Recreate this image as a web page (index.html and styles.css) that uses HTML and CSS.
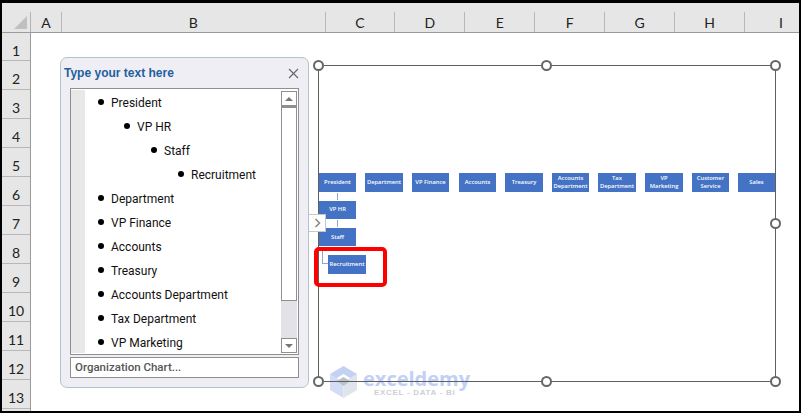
FILE: index.html
```html
<!DOCTYPE html>
<html lang="en">
<head>
  <meta charset="UTF-8" />
  <title>Type your text here</title>
  <link rel="stylesheet" href="styles.css">
</head>
<body>
  <div class="sheet">
    <div class="col-heads">
      <div class="corner"><span class="corner-mark"></span></div>
      <div class="col col-a">A</div>
      <div class="col col-b">B</div>
      <div class="col">C</div>
      <div class="col">D</div>
      <div class="col">E</div>
      <div class="col">F</div>
      <div class="col">G</div>
      <div class="col">H</div>
      <div class="col col-i">I</div>
    </div>
    <div class="row-heads">
      <div class="row row-first">1</div>
      <div class="row">2</div>
      <div class="row">3</div>
      <div class="row">4</div>
      <div class="row">5</div>
      <div class="row">6</div>
      <div class="row">7</div>
      <div class="row">8</div>
      <div class="row">9</div>
      <div class="row">10</div>
      <div class="row">11</div>
      <div class="row">12</div>
      <div class="row">13</div>
    </div>

    <!-- text pane floats over the cells -->
    <div class="pane">
      <div class="pane-head">
        <span class="pane-title">Type your text here</span>
        <svg class="pane-close" width="11" height="11" viewBox="0 0 11 11"><path d="M1 1l9 9M10 1l-9 9" stroke="#666" stroke-width="1.1" fill="none"/></svg>
      </div>
      <div class="list-box">
        <div class="gutter"></div>
        <ul class="list">
          <li>President</li>
          <li class="lvl2">VP HR</li>
          <li class="lvl3">Staff</li>
          <li class="lvl4">Recruitment</li>
          <li>Department</li>
          <li>VP Finance</li>
          <li>Accounts</li>
          <li>Treasury</li>
          <li>Accounts Department</li>
          <li>Tax Department</li>
          <li>VP Marketing</li>
        </ul>
        <div class="scroll">
          <div class="scroll-btn"><span class="arrow-up"></span></div>
          <div class="scroll-thumb"></div>
          <div class="scroll-btn scroll-btn-end"><span class="arrow-down"></span></div>
        </div>
      </div>
      <div class="pane-foot">Organization Chart...</div>
    </div>

    <!-- watermark sits under the frame lines -->
    <div class="mark">
      <svg class="mark-logo" width="29" height="32" viewBox="0 0 29 32">
        <path d="M14.5 0L28 8v8L14.5 8 1 16V8z" fill="#c3d1f3"/>
        <path d="M1 8l13.5 8v16L1 24z" fill="#d3def6"/>
        <path d="M28 8L14.5 16v16L28 24z" fill="#dfe5ea"/>
        <path d="M8 15l6.5-4 6.5 4-6.5 5z" fill="#bcc2ca"/>
      </svg>
      <div class="mark-text">
        <span class="mark-name">exceldemy</span>
        <span class="mark-sub">EXCEL - DATA - BI</span>
      </div>
    </div>

    <!-- SmartArt frame, shapes are placed on its canvas -->
    <div class="chart">
      <span class="handle h-tl"></span>
      <span class="handle h-tm"></span>
      <span class="handle h-tr"></span>
      <span class="handle h-ml"></span>
      <span class="handle h-mr"></span>
      <span class="handle h-bl"></span>
      <span class="handle h-bm"></span>
      <span class="handle h-br"></span>

      <div class="node n1">President</div>
      <div class="node n2">Department</div>
      <div class="node n3">VP Finance</div>
      <div class="node n4">Accounts</div>
      <div class="node n5">Treasury</div>
      <div class="node n6">Accounts Department</div>
      <div class="node n7">Tax Department</div>
      <div class="node n8">VP Marketing</div>
      <div class="node n9">Customer Service</div>
      <div class="node n10">Sales</div>
      <div class="node n-vp">VP HR</div>
      <div class="node n-staff">Staff</div>
      <div class="node n-rec">Recruitment</div>
      <span class="link link-a"></span>
      <span class="link link-b"></span>
      <span class="elbow"></span>
      <div class="red-box"></div>
    </div>

    <div class="toggle">
      <svg width="7" height="10" viewBox="0 0 7 10"><path d="M1.5 1l4 4-4 4" stroke="#8a8a8a" stroke-width="1.6" fill="none"/></svg>
    </div>
  </div>
</body>
</html>
```

FILE: styles.css
```css
* {
  margin: 0;
  padding: 0;
  box-sizing: border-box;
}

html, body {
  height: 100%;
  overflow: hidden;
  background: #000;
  font-family: 'Roboto', 'Open Sans', sans-serif;
}

body {
  padding: 3px 2px 2px 2px;
}

.sheet {
  position: relative;
  width: 797px;
  height: 408px;
  background: #fff;
  overflow: hidden;
}

.col-heads {
  display: flex;
  height: 30px;
  background: #e6e6e6;
  border-bottom: 1px solid #9b9b9b;
}

.corner {
  width: 29px;
  margin-top: 9px;
  border-right: 1px solid #b4b4b4;
  position: relative;
}

.corner-mark {
  position: absolute;
  right: 3px;
  bottom: 3px;
  width: 0;
  height: 0;
  border-left: 13px solid transparent;
  border-bottom: 13px solid #c0c0c0;
}

.col {
  width: 70px;
  margin-top: 9px;
  font-family: 'Lato', sans-serif;
  font-size: 14px;
  color: #222;
  text-align: center;
  line-height: 21px;
  border-right: 1px solid #b8b8b8;
}

.col-a { width: 31px; }
.col-b { width: 264px; }
.col-i { width: 54px; border-right: none; text-align: left; padding-left: 34px; }

.row-heads {
  width: 29px;
  background: #e6e6e6;
  border-right: 1px solid #9b9b9b;
  height: 378px;
}

.row {
  height: 29px;
  padding-top: 8px;
  font-family: 'Lato', sans-serif;
  font-size: 14px;
  line-height: 20px;
  color: #222;
  text-align: center;
  border-bottom: 1px solid #b8b8b8;
}

.row-first { height: 28px; }

.pane {
  position: absolute;
  left: 58px;
  top: 54px;
  width: 249px;
  height: 331px;
  background: #eeeef4;
  border: 1px solid #b3c3c6;
  border-radius: 7px;
  padding: 0 9px;
  display: flex;
  flex-direction: column;
}

.pane-head {
  height: 30px;
  display: flex;
  align-items: center;
  justify-content: space-between;
  margin-left: -6px;
}

.pane-title {
  font-family: 'Liberation Sans', sans-serif;
  font-weight: 700;
  font-size: 12px;
  color: #1f5f9e;
}

.list-box {
  height: 267px;
  background: #fff;
  border: 1px solid #8f8f8f;
  display: flex;
  overflow: hidden;
}

.gutter {
  width: 14px;
  margin: 1px 0;
  background: #e8e8e8;
}

.list {
  flex: 1;
  list-style: none;
  padding-top: 2px;
  overflow: hidden;
}

.list li {
  position: relative;
  height: 24px;
  line-height: 24px;
  padding-left: 26px;
  font-size: 12px;
  color: #111;
}

.list li::before {
  content: '';
  position: absolute;
  left: 13px;
  top: 8px;
  width: 6px;
  height: 6px;
  border-radius: 50%;
  background: #000;
}

.list li.lvl2 { padding-left: 52px; }
.list li.lvl2::before { left: 39px; }
.list li.lvl3 { padding-left: 79px; }
.list li.lvl3::before { left: 66px; }
.list li.lvl4 { padding-left: 106px; }
.list li.lvl4::before { left: 93px; }

.scroll {
  width: 16px;
  margin: 2px 1px 1px 0;
  background: #e2e2e8;
  display: flex;
  flex-direction: column;
}

.scroll-btn {
  height: 15px;
  background: #fff;
  border: 1px solid #8f8f8f;
  display: flex;
  align-items: center;
  justify-content: center;
}

.scroll-thumb {
  height: 195px;
  background: #fff;
  border: 1px solid #8f8f8f;
  border-top-width: 2px;
}

.scroll-btn-end {
  margin-top: auto;
}

.arrow-up {
  border-left: 4px solid transparent;
  border-right: 4px solid transparent;
  border-bottom: 4px solid #777;
}

.arrow-down {
  border-left: 4px solid transparent;
  border-right: 4px solid transparent;
  border-top: 4px solid #777;
}

.pane-foot {
  height: 21px;
  margin-top: 2px;
  padding-left: 4px;
  background: #fff;
  border: 1px solid #8f8f8f;
  font-size: 11.5px;
  font-weight: 500;
  line-height: 19px;
  color: #555;
}

.chart {
  position: absolute;
  left: 316px;
  top: 62px;
  width: 458px;
  height: 317px;
  border: 1px solid #5f5f5f;
}

.handle {
  position: absolute;
  width: 11px;
  height: 11px;
  border: 2px solid #666;
  border-radius: 50%;
  background: #fff;
  z-index: 2;
}

.h-tl { left: -6px; top: -6px; }
.h-tm { left: 222px; top: -6px; }
.h-tr { left: 451px; top: -6px; }
.h-ml { left: -6px; top: 152px; }
.h-mr { left: 451px; top: 152px; }
.h-bl { left: -6px; top: 310px; }
.h-bm { left: 222px; top: 310px; }
.h-br { left: 451px; top: 310px; }

.node {
  position: absolute;
  top: 107px;
  width: 37px;
  height: 19px;
  padding-bottom: 2px;
  background: #4472c4;
  color: #fff;
  font-family: 'Open Sans', sans-serif;
  font-size: 5.8px;
  font-weight: 600;
  line-height: 8px;
  display: flex;
  align-items: center;
  justify-content: center;
  text-align: center;
}

.n1 { left: 0; }
.n2 { left: 46px; width: 38px; }
.n3 { left: 93px; }
.n4 { left: 140px; }
.n5 { left: 186px; width: 38px; }
.n6 { left: 233px; }
.n7 { left: 279px; width: 38px; }
.n8 { left: 326px; width: 38px; padding-left: 6px; padding-right: 6px; }
.n9 { left: 373px; }
.n10 { left: 419px; }

.n-vp { top: 135px; height: 18px; }
.n-staff { top: 162px; height: 18px; padding-bottom: 0; }
.n-rec { top: 189px; left: 9px; width: 38px; }

.link {
  position: absolute;
  left: 18px;
  width: 1px;
  height: 7px;
  background: #8ea6d6;
}

.link-a { top: 127px; }
.link-b { top: 154px; }

.elbow {
  position: absolute;
  left: 3px;
  top: 181px;
  width: 6px;
  height: 17px;
  border-left: 1px solid #8ea6d6;
  border-bottom: 1px solid #8ea6d6;
}

.red-box {
  position: absolute;
  left: -5px;
  top: 181px;
  width: 73px;
  height: 40px;
  border: 4px solid #f00;
  border-radius: 5px;
}

.toggle {
  position: absolute;
  left: 307px;
  top: 211px;
  width: 17px;
  height: 18px;
  background: #fff;
  border: 1px solid #c8c8c8;
  border-left: none;
  display: flex;
  align-items: center;
  justify-content: center;
  z-index: 3;
}

.mark {
  position: absolute;
  left: 327px;
  top: 363px;
  display: flex;
  gap: 5px;
}

.mark-text {
  display: flex;
  flex-direction: column;
}

.mark-name {
  font-family: 'Open Sans', sans-serif;
  font-size: 20px;
  font-weight: 700;
  line-height: 21px;
  margin-top: 2px;
  color: #c2d0f5;
}

.mark-sub {
  font-family: 'Liberation Sans', sans-serif;
  font-size: 8px;
  font-weight: 700;
  letter-spacing: .7px;
  line-height: 9px;
  margin-top: -1px;
  color: #cdd0d6;
  padding-left: 11px;
}
```
